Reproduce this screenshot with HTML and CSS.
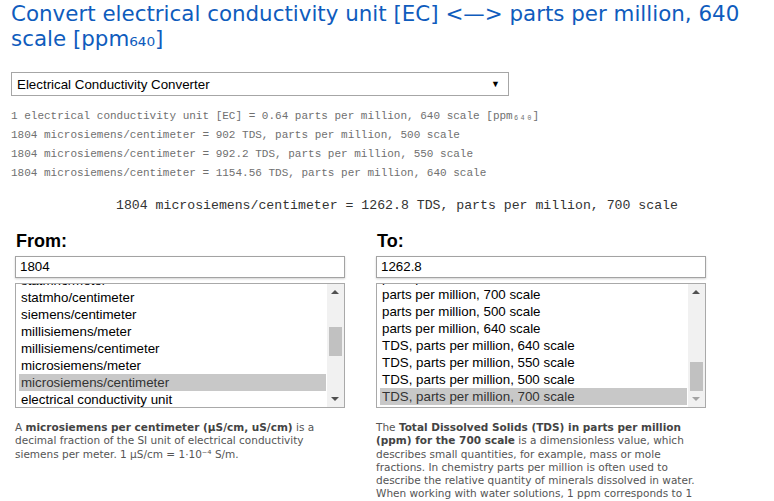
FILE: index.html
```html
<!DOCTYPE html>
<html>
<head>
<meta charset="utf-8">
<link rel="stylesheet" href="styles.css">
</head>
<body>
<div class="page">
  <h1 class="title">Convert electrical conductivity unit [EC] &lt;—&gt; parts per million, 640 scale [ppm₆₄₀]</h1>
  <div class="picker">
    <span class="picker-label">Electrical Conductivity Converter</span>
    <span class="picker-arrow">▼</span>
  </div>
  <div class="results">
    <div class="res">1 electrical conductivity unit [EC] = 0.64 parts per million, 640 scale [ppm₆₄₀]</div>
    <div class="res">1804 microsiemens/centimeter = 902 TDS, parts per million, 500 scale</div>
    <div class="res">1804 microsiemens/centimeter = 992.2 TDS, parts per million, 550 scale</div>
    <div class="res">1804 microsiemens/centimeter = 1154.56 TDS, parts per million, 640 scale</div>
  </div>
  <div class="main-result">1804 microsiemens/centimeter = 1262.8 TDS, parts per million, 700 scale</div>
  <div class="columns">
    <div class="col">
      <div class="col-head">From:</div>
      <div class="field">1804</div>
      <div class="listbox">
        <div class="items items-left">
          <div class="item">statmho/meter</div>
          <div class="item">statmho/centimeter</div>
          <div class="item">siemens/centimeter</div>
          <div class="item">millisiemens/meter</div>
          <div class="item">millisiemens/centimeter</div>
          <div class="item">microsiemens/meter</div>
          <div class="item selected">microsiemens/centimeter</div>
          <div class="item">electrical conductivity unit</div>
        </div>
        <div class="scrollbar">
          <span class="arrow up"></span>
          <span class="thumb thumb-left"></span>
          <span class="arrow down"></span>
        </div>
      </div>
      <p class="desc">A <b>microsiemens per centimeter (µS/cm, uS/cm)</b> is a decimal fraction of the SI unit of electrical conductivity siemens per meter. 1 µS/cm = 1·10⁻⁴ S/m.</p>
    </div>
    <div class="col">
      <div class="col-head">To:</div>
      <div class="field">1262.8</div>
      <div class="listbox">
        <div class="items items-right">
          <div class="item">parts per million, 550 scale</div>
          <div class="item">parts per million, 700 scale</div>
          <div class="item">parts per million, 500 scale</div>
          <div class="item">parts per million, 640 scale</div>
          <div class="item">TDS, parts per million, 640 scale</div>
          <div class="item">TDS, parts per million, 550 scale</div>
          <div class="item">TDS, parts per million, 500 scale</div>
          <div class="item selected">TDS, parts per million, 700 scale</div>
        </div>
        <div class="scrollbar">
          <span class="arrow up"></span>
          <span class="thumb thumb-right"></span>
          <span class="arrow down disabled"></span>
        </div>
      </div>
      <p class="desc">The <b>Total Dissolved Solids (TDS) in parts per million (ppm) for the 700 scale</b> is a dimensionless value, which describes small quantities, for example, mass or mole fractions. In chemistry parts per million is often used to describe the relative quantity of minerals dissolved in water. When working with water solutions, 1 ppm corresponds to 1 mg/L, that is, milligrams of a substance per liter of water.</p>
    </div>
  </div>
</div>
</body>
</html>
```
FILE: styles.css
```css
html, body {
  margin: 0;
  padding: 0;
  background: #fff;
  overflow: hidden;
}
.page {
  padding: 0 0 0 11px;
  width: 763px;
  height: 501px;
  overflow: hidden;
}
.title {
  margin: 0;
  padding-top: 1px;
  font-family: "DejaVu Sans", Verdana, sans-serif;
  font-weight: normal;
  font-size: 21.4px;
  line-height: 25px;
  color: #0f5cbd;
  width: 750px;
}
.picker {
  margin-top: 21px;
  height: 22px;
  border: 1px solid #a6a6a6;
  display: flex;
  align-items: center;
  justify-content: space-between;
  padding: 0 8px 0 5px;
  box-sizing: content-box;
  width: 483px;
  font-family: "Liberation Sans", Arial, sans-serif;
  font-size: 13.33px;
  color: #000;
}
.picker-arrow {
  font-size: 9px;
  color: #000;
}
.results {
  margin-top: 11px;
  font-family: "Liberation Mono", monospace;
  font-size: 11px;
  line-height: 19px;
  color: #707070;
}
.main-result {
  margin-top: 14px;
  margin-left: 105px;
  font-family: "Liberation Mono", monospace;
  font-size: 13.2px;
  line-height: 18px;
  color: #333;
}
.columns {
  display: flex;
  gap: 31px;
  margin-top: 16px;
  padding-left: 4px;
}
.col {
  width: 330px;
}
.col-head {
  font-family: "Liberation Sans", Arial, sans-serif;
  font-weight: bold;
  font-size: 18px;
  line-height: 20px;
  color: #000;
  padding-left: 1px;
}
.field {
  margin-top: 5px;
  height: 20px;
  border: 1px solid #a3a3a3;
  box-shadow: 0 1px 2px rgba(0,0,0,0.18);
  padding-left: 4px;
  font-family: "Liberation Sans", Arial, sans-serif;
  font-size: 13.33px;
  line-height: 20px;
  color: #000;
}
.listbox {
  margin-top: 5px;
  height: 123px;
  border: 1px solid #a9a9a9;
  display: flex;
  overflow: hidden;
}
.items {
  flex: 1;
  padding: 0 1px 0 3px;
  overflow: hidden;
}
.items-left { margin-top: -12px; }
.items-right { margin-top: -15px; }
.item {
  height: 17px;
  line-height: 17px;
  padding-left: 2px;
  font-family: "Liberation Sans", Arial, sans-serif;
  font-size: 13.33px;
  color: #000;
  white-space: nowrap;
}
.item.selected {
  background: #c8c8c8;
  color: #333;
}
.scrollbar {
  width: 17px;
  background: #f1f1f1;
  display: flex;
  flex-direction: column;
  position: relative;
}
.arrow {
  width: 0;
  height: 0;
  position: absolute;
  left: 4px;
  border-left: 4px solid transparent;
  border-right: 4px solid transparent;
}
.arrow.up {
  top: 6px;
  border-bottom: 4px solid #505050;
}
.arrow.down {
  bottom: 6px;
  border-top: 4px solid #505050;
}
.arrow.down.disabled {
  border-top-color: #a3a3a3;
}
.thumb {
  position: absolute;
  left: 2px;
  width: 13px;
  background: #c1c1c1;
}
.thumb-left { top: 43px; height: 29px; }
.thumb-right { top: 78px; height: 29px; }
.desc {
  margin: 13px 0 0 0;
  font-family: "DejaVu Sans", Verdana, sans-serif;
  font-size: 10.5px;
  line-height: 13.3px;
  color: #555;
}
.desc b {
  color: #444;
}
```
